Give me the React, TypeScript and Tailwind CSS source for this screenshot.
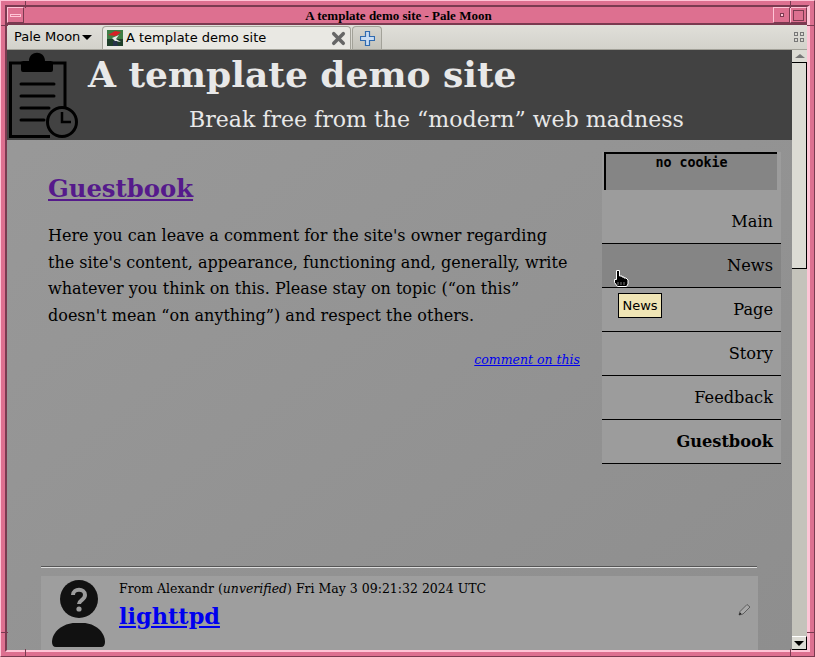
import { X } from 'lucide-react';

const SERIF = 'font-["DejaVu_Serif",serif]';

const NAV = [
  { label: 'Main' },
  { label: 'News', hover: true },
  { label: 'Page' },
  { label: 'Story' },
  { label: 'Feedback' },
  { label: 'Guestbook', current: true },
];

function TitleButton({ children, className = '' }: { children?: React.ReactNode; className?: string }) {
  return (
    <div className={`flex h-[16px] items-center justify-center border-t border-r border-b border-l border-t-[#ffc4d6] border-r-[#7a3a50] border-b-[#7a3a50] border-l-[#ffc4d6] bg-[#dd7090] ${className}`}>
      {children}
    </div>
  );
}

function Favicon() {
  return (
    <svg width="16" height="16" viewBox="0 0 16 16" className="shrink-0">
      <rect width="16" height="16" fill="#3f7d45" />
      <rect y="9" width="16" height="7" fill="#1f3f2a" />
      <path d="M1 5 L8 1 L14 2 L9 6 Z" fill="#d81f26" />
      <path d="M5 8 L12 5 L9 9 L14 12 L8 11 Z" fill="#e8e8e8" />
      <path d="M6 11 L10 11 L11 16 L6 16 Z" fill="#27324a" />
    </svg>
  );
}

function ClipboardIcon() {
  return (
    <svg width="72" height="90" viewBox="0 0 72 90" className="shrink-0" fill="none" stroke="#000">
      <path d="M14 13 H2.5 V86.5 H42" strokeWidth="3" />
      <path d="M44 13 H57 V58" strokeWidth="3" />
      <path d="M13 20 V13 Q13 11 15 11 H21 C21 0 37 0 37 11 H43 Q45 11 45 13 V20 Q45 22 43 22 H15 Q13 22 13 20 Z" fill="#000" stroke="none" />
      <path d="M13 34 H46 M13 46 H46 M13 58 H41 M13 70 H36" strokeWidth="3" strokeLinecap="round" />
      <circle cx="54" cy="72" r="14.5" strokeWidth="3" />
      <path d="M54 62 V72 H63" strokeWidth="2.5" />
    </svg>
  );
}

function AvatarIcon() {
  return (
    <svg width="54" height="68" viewBox="0 0 54 68" className="shrink-0">
      <circle cx="27" cy="19" r="19" fill="#111" />
      <path d="M21 15 C21 8 33 8 33 15 C33 20 27 20 27 24" fill="none" stroke="#9c9c9c" strokeWidth="4" />
      <circle cx="27" cy="29" r="2.6" fill="#9c9c9c" />
      <path d="M0 62 C0 52 11 43 23 43 H31 C43 43 53 52 53 62 Q53 67 49 67 H4 Q0 67 0 62 Z" fill="#111" />
    </svg>
  );
}

function PencilIcon() {
  return (
    <svg width="13" height="13" viewBox="0 0 13 13" fill="none" className="shrink-0">
      <path d="M1 12 L2 8.5 L9 1.5 L12 4 L5 11 Z" fill="#a8a8a8" stroke="#555" strokeWidth="0.9" />
      <path d="M1 12 L2 9.5 L3.5 11 Z" fill="#111" />
    </svg>
  );
}

function PlusIcon() {
  return (
    <svg width="15" height="15" viewBox="0 0 15 15">
      <path d="M5.5 0.5 H9.5 V5.5 H14.5 V9.5 H9.5 V14.5 H5.5 V9.5 H0.5 V5.5 H5.5 Z" fill="#c9dcf2" stroke="#2f6ab0" strokeWidth="1.2" />
    </svg>
  );
}

function HandCursor() {
  return (
    <svg width="15" height="17" viewBox="0 0 15 17" className="absolute top-[220px] left-[607px]">
      <path d="M2.5 0.5 H5.5 V6 H8 V7 H10 V8 H12 L14 10 V14 L12.5 16.5 H3.5 L0.5 12.5 V9.5 H2.5 Z" fill="#000" stroke="#fff" strokeWidth="1" />
      <path d="M4 12 V15 M7 12 V15 M10 12 V15" stroke="#999" strokeWidth="0.8" />
    </svg>
  );
}

function Tick({ className }: { className: string }) {
  return <div className={`absolute bg-[#7a3a50] ${className}`} />;
}

function Scrollbar() {
  return (
    <div className="flex w-[15px] shrink-0 flex-col bg-[#c4c3bb]">
      <div className="flex h-[13px] items-center justify-center border-b border-b-black bg-[#dcdbd4]">
        <div className="h-0 w-0 border-x-[5px] border-b-[4px] border-x-transparent border-b-[#777]" />
      </div>
      <div className="h-[206px] border-r border-b border-r-black border-b-black bg-[#dcdbd4]" />
      <div className="flex-1" />
      <div className="flex h-[14px] items-center justify-center border-t border-r border-b border-t-white border-r-black border-b-black bg-[#dcdbd4]">
        <div className="h-0 w-0 border-x-[5px] border-t-[5px] border-x-transparent border-t-black" />
      </div>
    </div>
  );
}

export default function App() {
  return (
    <div className="relative h-[657px] w-[815px] overflow-hidden border-t border-r border-b border-l border-t-[#ffc4d6] border-r-[#7a3a50] border-b-[#7a3a50] border-l-[#ffc4d6] bg-[#dd7090] p-[4px]">
      <div className="flex h-full flex-col border-t-2 border-r-[3px] border-b-2 border-l-2 border-t-[#7a3a50] border-r-[#ffc4d6] border-b-[#ffc4d6] border-l-[#7a3a50]">
        {/* title bar */}
        <div className="flex h-[18px] shrink-0 items-center border-b-2 border-b-[#7a3a50] bg-[#dd7090]">
          <TitleButton className="w-[17px]">
            <div className="h-[3px] w-[11px] border border-[#ffc4d6] bg-[#dd7090]" />
          </TitleButton>
          <div className="flex-1 text-center font-['Liberation_Serif',serif] text-[13px] leading-[15px] font-bold text-black">
            A template demo site - Pale Moon
          </div>
          <TitleButton className="w-[17px]">
            <div className="h-[4px] w-[4px] border border-[#7a3a50] bg-[#ffc4d6]" />
          </TitleButton>
          <TitleButton className="w-[17px]">
            <div className="h-[11px] w-[11px] border border-[#7a3a50]" />
          </TitleButton>
        </div>

        {/* tab strip */}
        <div className="flex h-[25px] shrink-0 items-end border-b border-b-[#a3a299] bg-gradient-to-b from-[#e0dfd9] to-[#d3d2cb] font-['DejaVu_Sans',sans-serif] text-[13px] text-black">
          <div className="flex h-full w-[95px] items-center pl-[7px]">
            Pale Moon
            <div className="ml-[2px] h-0 w-0 border-x-[5px] border-t-[5px] border-x-transparent border-t-black" />
          </div>
          <div className="flex h-[23px] w-[249px] items-center rounded-t-[4px] border border-b-0 border-[#a3a299] bg-[#e9e8e3] pl-[4px]">
            <Favicon />
            <span className="ml-[3px] flex-1">A template demo site</span>
            <X size={19} strokeWidth={4.5} className="mr-[2px] text-[#666]" />
          </div>
          <div className="ml-[1px] flex h-[23px] w-[30px] items-center justify-center rounded-t-[4px] border border-b-0 border-[#a3a299] bg-gradient-to-b from-[#d6d5ce] to-[#c4c3bb]">
            <PlusIcon />
          </div>
          <div className="flex-1" />
          <div className="mr-[3px] mb-[7px] grid grid-cols-2 gap-[2px]">
            <div className="h-[4px] w-[4px] border border-[#777]" />
            <div className="h-[4px] w-[4px] border border-[#777]" />
            <div className="h-[4px] w-[4px] border border-[#777]" />
            <div className="h-[4px] w-[4px] border border-[#777]" />
          </div>
        </div>

        {/* browser content */}
        <div className="flex min-h-0 flex-1">
          <div className={`relative flex min-w-0 flex-1 flex-col overflow-hidden bg-gradient-to-br from-[#999999] to-[#8e8e8e] ${SERIF}`}>
            <header className="flex h-[90px] shrink-0 bg-[#424242] pl-[1px]">
              <ClipboardIcon />
              <div className="flex-1 pt-[3px] pl-[8px] text-[#e8e8e8]">
                <h1 className="text-[36px] leading-[42px] font-bold">A template demo site</h1>
                <p className="mt-[12px] pl-[101px] text-[22.05px] leading-[26px]">Break free from the “modern” web madness</p>
              </div>
            </header>

            <div className="flex h-[426px] shrink-0">
              <main className="w-[573px] shrink-0 pt-[33px] pl-[41px]">
                <h2 className="text-[24.3px] leading-[32px] font-bold text-[#551a8b] underline">Guestbook</h2>
                <p className="mt-[18px] w-[525px] text-[16px] leading-[26.6px] text-black">
                  Here you can leave a comment for the site's owner regarding the site's content, appearance, functioning and, generally, write whatever you think on this. Please stay on topic (“on this” doesn't mean “on anything”) and respect the others.
                </p>
                <div className="mt-[22px] w-[532px] text-right text-[12.5px] leading-[17px] text-[#0000ee] italic underline">comment on this</div>
              </main>
              <nav className="mt-[12px] ml-[22px] h-[312px] w-[179px] shrink-0 bg-[#9c9c9c]">
                <div className="ml-[2px] h-[38px] w-[173px] border-t-2 border-l-2 border-t-black border-l-black bg-[#858585] text-center font-['DejaVu_Sans_Mono',monospace] text-[13.33px] leading-[18px] font-bold text-black">
                  no cookie
                </div>
                <div className="h-[10px]" />
                {NAV.map(item => (
                  <div
                    key={item.label}
                    className={`flex h-[44px] items-center justify-end border-b border-b-black pt-[2px] pr-[8px] text-[16.2px] text-black ${item.hover ? 'bg-[#858585]' : ''} ${item.current ? 'font-bold' : ''}`}
                  >
                    {item.label}
                  </div>
                ))}
              </nav>
            </div>

            <div className="ml-[34px] h-[2px] w-[716px] shrink-0 border-t border-b border-t-[#555] border-b-[#ddd]" />
            <div className="mt-[8px] ml-[34px] flex h-[74px] w-[717px] shrink-0 bg-[#9e9e9e] pt-[4px] pl-[11px] text-black">
              <AvatarIcon />
              <div className="ml-[13px] flex-1">
                <div className="text-[12.5px] leading-[18px]">
                  From Alexandr (<em>unverified</em>) Fri May 3 09:21:32 2024 UTC
                </div>
                <div className="mt-[2px] flex items-start justify-between">
                  <a className="text-[22.4px] leading-[32px] font-bold text-[#0000ee] underline">lighttpd</a>
                  <div className="mt-[3px] mr-[7px]"><PencilIcon /></div>
                </div>
              </div>
            </div>

            <HandCursor />
            <div className="absolute top-[243px] left-[611px] flex h-[25px] w-[44px] items-center justify-center border border-black bg-[#f0e5b5] font-['DejaVu_Sans',sans-serif] text-[13px] text-black">
              News
            </div>
          </div>
          <Scrollbar />
        </div>
      </div>

      {/* frame corner notches */}
      <Tick className="top-0 left-[24px] h-[7px] w-[1px]" />
      <Tick className="top-[24px] left-0 h-[1px] w-[7px]" />
      <Tick className="top-0 left-[789px] h-[7px] w-[1px]" />
      <Tick className="top-[24px] left-[806px] h-[1px] w-[7px]" />
      <Tick className="top-[648px] left-[24px] h-[7px] w-[1px]" />
      <Tick className="top-[631px] left-0 h-[1px] w-[7px]" />
      <Tick className="top-[648px] left-[789px] h-[7px] w-[1px]" />
      <Tick className="top-[631px] left-[806px] h-[1px] w-[7px]" />
    </div>
  );
}
